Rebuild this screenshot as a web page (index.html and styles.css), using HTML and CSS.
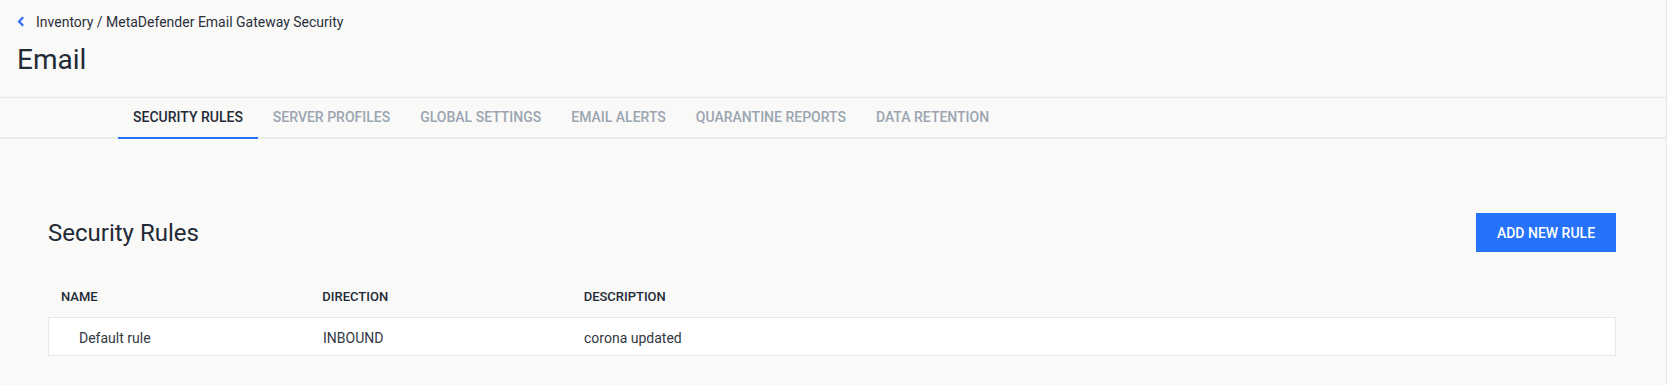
FILE: index.html
```html
<!DOCTYPE html>
<html lang="en">
<head>
    <meta charset="UTF-8">
    <meta name="viewport" content="width=device-width, initial-scale=1.0">
    <title>Email - Security Rules</title>
    <link rel="stylesheet" href="styles.css">
</head>
<body>
    <div class="page">
        <header class="page-header">
            <div class="breadcrumb">
                <svg class="back-icon" width="8" height="11" viewBox="0 0 8 11">
                    <path d="M6.2 1.2 L2 5.5 L6.2 9.8" fill="none" stroke="#2f6bf5" stroke-width="2.2"/>
                </svg>
                <span>Inventory / MetaDefender Email Gateway Security</span>
            </div>
            <h1>Email</h1>
        </header>

        <nav class="tabs">
            <a class="tab active">SECURITY RULES</a>
            <a class="tab">SERVER PROFILES</a>
            <a class="tab">GLOBAL SETTINGS</a>
            <a class="tab">EMAIL ALERTS</a>
            <a class="tab">QUARANTINE REPORTS</a>
            <a class="tab">DATA RETENTION</a>
        </nav>

        <main class="content">
            <div class="section-head">
                <h2>Security Rules</h2>
                <button class="primary-btn">ADD NEW RULE</button>
            </div>

            <div class="rules-table">
                <div class="table-head">
                    <div class="cell">NAME</div>
                    <div class="cell">DIRECTION</div>
                    <div class="cell">DESCRIPTION</div>
                </div>
                <div class="table-row">
                    <div class="cell first">Default rule</div>
                    <div class="cell">INBOUND</div>
                    <div class="cell">corona updated</div>
                </div>
            </div>
        </main>
    </div>
</body>
</html>
```

FILE: styles.css
```css
:root {
    --bg-color: #f9f9f8;
    --text-color: #232a36;
    --muted-text: #9aa5b1;
    --line-color: #e8e8e8;
    --tab-line: #e9ecef;
    --accent: #2672fb;
}

body {
    margin: 0;
    font-family: Roboto, "Liberation Sans", Arial, sans-serif;
    background-color: var(--bg-color);
    color: var(--text-color);
}

.page {
    min-height: 384px;
    border-right: 1px solid var(--line-color);
}

.page-header {
    padding: 12px 17px 19px;
    border-bottom: 1px solid var(--line-color);
}

.breadcrumb {
    display: flex;
    align-items: center;
    gap: 11px;
    font-size: 14px;
    line-height: 20px;
    color: #2b303a;
}

.back-icon {
    display: block;
    margin-top: -1px;
}

h1 {
    margin: 10px 0 0;
    font-size: 28px;
    line-height: 36px;
    font-weight: 400;
}

.tabs {
    display: flex;
    padding-left: 118px;
    border-bottom: 2px solid var(--tab-line);
}

.tab {
    padding: 0 15px;
    font-size: 14px;
    line-height: 39px;
    font-weight: 500;
    color: var(--muted-text);
    margin-bottom: -2px;
    border-bottom: 2px solid transparent;
}

.tab.active {
    color: var(--text-color);
    border-bottom-color: var(--accent);
}

.content {
    padding: 74px 50px 20px 48px;
}

.section-head {
    display: flex;
    align-items: center;
    justify-content: space-between;
}

h2 {
    margin: 0;
    font-size: 24px;
    line-height: 32px;
    font-weight: 400;
}

.primary-btn {
    height: 39px;
    width: 140px;
    padding: 0;
    background-color: var(--accent);
    color: white;
    border: none;
    font-family: inherit;
    font-size: 14px;
    font-weight: 500;
    cursor: pointer;
}

.rules-table {
    margin-top: 29px;
}

.table-head, .table-row {
    display: grid;
    grid-template-columns: 1fr 1fr 4fr;
}

.table-head {
    padding: 8px 0 12px;
    font-size: 13px;
    line-height: 16px;
    font-weight: 500;
}

.table-row {
    background-color: white;
    border: 1px solid var(--line-color);
    padding: 10px 0 7px;
    font-size: 14px;
    line-height: 20px;
    color: #333842;
}

.cell {
    padding: 0 13px;
}

.table-row .cell.first {
    padding-left: 30px;
}
```
